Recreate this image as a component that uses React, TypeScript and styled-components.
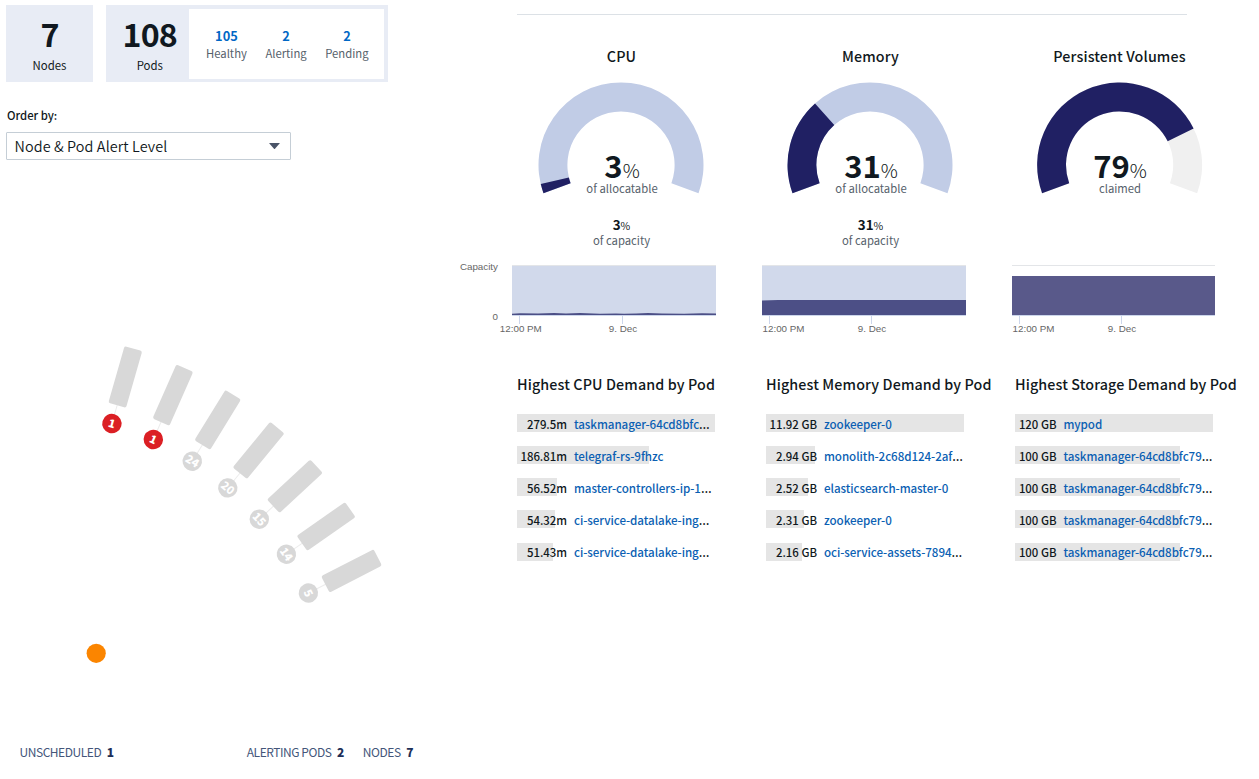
import React from 'react';
import styled, { createGlobalStyle } from 'styled-components';

const GlobalStyle = createGlobalStyle`
  * { box-sizing: border-box; }
  body {
    margin: 0;
    background: #fff;
    color: #101820;
    font-family: "Source Sans Pro", "Noto Sans CJK JP", "Noto Sans", sans-serif;
  }
`;

const Page = styled.main`
  display: flex;
  width: 1259px;
  height: 779px;
  overflow: hidden;
  white-space: nowrap;
`;

/* ---------- left: cluster overview ---------- */

const Overview = styled.section`
  display: flex;
  flex-direction: column;
  width: 447px;
  padding-top: 5px;
`;

const Cards = styled.div`
  display: flex;
  gap: 13px;
  padding-left: 6px;
`;

const Card = styled.div`
  display: flex;
  height: 77px;
  background: #e8ecf5;
`;

const Total = styled.div<{ $shift?: number }>`
  width: ${(p) => (p.$shift ? 83 : 87)}px;
  padding-top: 8px;
  padding-left: ${(p) => p.$shift ?? 0}px;
  text-align: center;
`;

const TotalValue = styled.div`
  margin-bottom: 4px;
  font-size: 32.2px;
  font-weight: 700;
  line-height: 40px;
  letter-spacing: -0.8px;
`;

const TotalLabel = styled.div`
  font-size: 11.4px;
  line-height: 16px;
`;

const StatusBox = styled.div`
  display: flex;
  gap: 18.5px;
  width: 195px;
  margin: 4px 4px 3px 0;
  padding: 18px 15px 0 17px;
  background: #fff;
`;

const Status = styled.div`
  text-align: center;
`;

const StatusCount = styled.div`
  font-size: 12.8px;
  font-weight: 700;
  line-height: 18px;
  color: #0067c5;
`;

const StatusLabel = styled.div`
  font-size: 11.3px;
  line-height: 17px;
  color: #56616b;
`;

const FieldLabel = styled.label`
  margin: 24px 0 8px 7px;
  font-size: 11.3px;
  font-weight: 500;
  line-height: 18px;
`;

const Select = styled.div`
  display: flex;
  align-items: center;
  justify-content: space-between;
  width: 285px;
  height: 28px;
  margin-left: 6px;
  padding: 0 10px 0 7.5px;
  border: 1px solid #c5ced6;
  border-radius: 1px;
  font-size: 14.4px;
  font-weight: 350;
  line-height: 26px;
  letter-spacing: 0.11px;
`;

const NodeMap = styled.svg`
  display: block;
  width: 447px;
  height: 580px;
`;

const NodeText = styled.text`
  font-size: 11.2px;
  font-weight: 900;
  fill: #fff;
  text-anchor: middle;
`;

const Legend = styled.div`
  display: flex;
  width: 413px;
  padding: 3px 0 0 19.5px;
  font-size: 12px;
  line-height: 18px;
  color: #44567a;
`;

const LegendItem = styled.span<{ $push?: boolean }>`
  margin-left: ${(p) => (p.$push ? 'auto' : '0')};
  margin-right: ${(p) => (p.$push ? '19px' : '0')};
  letter-spacing: -0.45px;

  b {
    margin-left: 5.5px;
    color: #1d3058;
    font-weight: 900;
  }
`;

/* ---------- right: metrics ---------- */

const Metrics = styled.section`
  flex: 1;
  padding-top: 14px;
`;

const Rule = styled.hr`
  width: 670px;
  height: 1px;
  margin: 0 0 0 70px;
  border: 0;
  background: #dce1e6;
`;

const Columns = styled.div<{ $top: number }>`
  display: grid;
  grid-template-columns: repeat(3, 249px);
  margin-left: 50px;
  padding-top: ${(p) => p.$top}px;
`;

const GaugeColumn = styled.div`
  display: flex;
  flex-direction: column;
  align-items: center;
  height: 219px;
`;

const Title = styled.h2`
  margin: 0;
  font-size: 14.3px;
  font-weight: 500;
  line-height: 20px;
  letter-spacing: 0.12px;
`;

const Gauge = styled.div`
  display: grid;
  margin: 14px 0 20px;
  height: 116px;

  > * { grid-area: 1 / 1; }
`;

const Readout = styled.div`
  align-self: end;
  padding-left: 1px;
  text-align: center;
`;

const BigValue = styled.div`
  font-size: 31px;
  font-weight: 700;
  line-height: 30px;

  span {
    font-size: 19px;
    font-weight: 300;
    line-height: 0;
  }
`;

const SmallValue = styled.div`
  font-size: 13.4px;
  font-weight: 700;
  line-height: 16px;

  span {
    font-size: 10.5px;
    font-weight: 400;
    line-height: 0;
  }
`;

const Caption = styled.div`
  font-size: 11.3px;
  line-height: 16px;
  color: #56616b;
  text-align: center;
`;

const ChartRow = styled.div`
  display: flex;
  height: 72px;
`;

const Axis = styled.div`
  display: flex;
  flex-direction: column;
  justify-content: space-between;
  width: 65px;
  height: 62px;
  margin-top: -4px;
  padding-right: 14px;
  font: 9.8px/12px "Liberation Sans", Arial, sans-serif;
  color: #666;
  text-align: right;
`;

const Plot = styled.svg`
  display: block;
  width: 204px;
  height: 72px;
  margin-right: 46px;
  overflow: visible;

  text {
    font: 9.8px "Liberation Sans", Arial, sans-serif;
    fill: #666;
    text-anchor: middle;
  }
`;

const DemandColumn = styled.div`
  padding-left: 20px;
`;

const Rows = styled.div`
  display: flex;
  flex-direction: column;
  gap: 14.15px;
  padding-top: 20px;
`;

const Row = styled.div<{ $bar: number }>`
  display: flex;
  width: 198px;
  height: 18px;
  padding-top: 0.8px;
  background: linear-gradient(#e5e5e5, #e5e5e5) no-repeat 0 0 / ${(p) => p.$bar}px 100%;
  font-size: 11.6px;
  line-height: 18px;

  > * { flex-shrink: 0; }
`;

const Amount = styled.span<{ $width: number }>`
  width: ${(p) => p.$width}px;
  margin-right: 7px;
  text-align: right;
  font-weight: 500;
  font-size: 11.4px;
`;

const PodLink = styled.a`
  color: #0b5fb3;
  font-weight: 500;
  letter-spacing: -0.06px;
`;

const Dots = styled.span`
  font-family: "Noto Sans", sans-serif;
  font-size: 13.5px;
`;

const nodes = [
  { x: 111.9, y: 423.6, pods: 1, alert: true },
  { x: 153.3, y: 439.5, pods: 1, alert: true },
  { x: 192.3, y: 461.2, pods: 24 },
  { x: 227.8, y: 487.9, pods: 20 },
  { x: 259.3, y: 519.2, pods: 15 },
  { x: 286.4, y: 554.3, pods: 14 },
  { x: 308.4, y: 593.1, pods: 5 },
];

function polar(radius: number, degrees: number) {
  const a = (degrees * Math.PI) / 180;
  return `${(85 - radius * Math.cos(a)).toFixed(2)} ${(85 - radius * Math.sin(a)).toFixed(2)}`;
}

/* The dial spans 220 degrees, starting 20 degrees below the horizontal. */
function band(from: number, to: number) {
  const a = from * 220 - 20;
  const b = to * 220 - 20;
  const large = b - a > 180 ? 1 : 0;
  return `M${polar(82.5, a)}A82.5 82.5 0 ${large} 1 ${polar(82.5, b)}L${polar(53.6, b)}A53.6 53.6 0 ${large} 0 ${polar(53.6, a)}Z`;
}

interface GaugeData {
  title: string;
  value: number;
  caption: string;
  rest: string;
  viewX: number;
  capacity?: number;
}

const gauges: GaugeData[] = [
  { title: 'CPU', value: 3, caption: 'of allocatable', rest: '#c1cce6', viewX: 0, capacity: 3 },
  { title: 'Memory', value: 31, caption: 'of allocatable', rest: '#c1cce6', viewX: 0, capacity: 31 },
  { title: 'Persistent Volumes', value: 79, caption: 'claimed', rest: '#f0f0f0', viewX: -0.6 },
];

const plots = [
  { area: 'M0 48.8L8 48.2L26 48.5L42 48.1L54 48.5L68 48.1L88 48.7L104 48.5L112 48.7L124 48.5L136 48.1L150 48.5L172 48.7L190 48.2L204 48.4V50H0Z', fill: '#4c4f86', back: '#d1d9eb', tick: 110.5 },
  { area: 'M0 35.5L16 35H204V50H0Z', fill: '#4c4f86', back: '#d1d9eb', tick: 109.5 },
  { area: 'M0 11H203V50H0Z', fill: '#59598a', back: 'none', tick: 109.5 },
];

const demands = [
  {
    title: 'Highest CPU Demand by Pod',
    amountWidth: 50,
    rows: [
      ['279.5m', 'taskmanager-64cd8bfc', true, 198],
      ['186.81m', 'telegraf-rs-9fhzc', false, 132],
      ['56.52m', 'master-controllers-ip-1', true, 40],
      ['54.32m', 'ci-service-datalake-ing', true, 38],
      ['51.43m', 'ci-service-datalake-ing', true, 36],
    ],
  },
  {
    title: 'Highest Memory Demand by Pod',
    amountWidth: 51,
    rows: [
      ['11.92 GB', 'zookeeper-0', false, 198],
      ['2.94 GB', 'monolith-2c68d124-2af', true, 49],
      ['2.52 GB', 'elasticsearch-master-0', false, 42],
      ['2.31 GB', 'zookeeper-0', false, 38],
      ['2.16 GB', 'oci-service-assets-7894', true, 36],
    ],
  },
  {
    title: 'Highest Storage Demand by Pod',
    amountWidth: 41.5,
    rows: [
      ['120 GB', 'mypod', false, 198],
      ['100 GB', 'taskmanager-64cd8bfc79', true, 165],
      ['100 GB', 'taskmanager-64cd8bfc79', true, 165],
      ['100 GB', 'taskmanager-64cd8bfc79', true, 165],
      ['100 GB', 'taskmanager-64cd8bfc79', true, 165],
    ],
  },
] as { title: string; amountWidth: number; rows: [string, string, boolean, number][] }[];

export default function App() {
  return (
    <Page>
      <GlobalStyle />
      <Overview>
        <Cards>
          <Card>
            <Total>
              <TotalValue>7</TotalValue>
              <TotalLabel>Nodes</TotalLabel>
            </Total>
          </Card>
          <Card>
            <Total $shift={4.5}>
              <TotalValue>108</TotalValue>
              <TotalLabel>Pods</TotalLabel>
            </Total>
            <StatusBox>
              {[['105', 'Healthy'], ['2', 'Alerting'], ['2', 'Pending']].map(([n, label]) => (
                <Status key={label}>
                  <StatusCount>{n}</StatusCount>
                  <StatusLabel>{label}</StatusLabel>
                </Status>
              ))}
            </StatusBox>
          </Card>
        </Cards>
        <FieldLabel>Order by:</FieldLabel>
        <Select>
          Node &amp; Pod Alert Level
          <svg width="11" height="6" viewBox="0 0 11 6">
            <path d="M0.6 0H10.4Q11 0 10.6 0.6L6 5.7Q5.5 6.2 5 5.7L0.4 0.6Q0 0 0.6 0Z" fill="#4a5468" />
          </svg>
        </Select>
        <NodeMap viewBox="0 160 447 580">
          {nodes.map((n, i) => (
            <g key={i} transform={`translate(${n.x} ${n.y}) rotate(${16 + 7.8 * i})`}>
              <line y1="-9" y2="-20" stroke="#ececec" strokeWidth="1" />
              <rect x="-9.2" y="-78" width="18.4" height="59" rx="2" fill="#d8d8d8" />
              <circle r="9.7" fill={n.alert ? '#db1f24' : '#d8d8d8'} />
              <NodeText y="4">{n.pods}</NodeText>
            </g>
          ))}
          <circle cx="96.2" cy="653.3" r="9.6" fill="#fb8500" />
        </NodeMap>
        <Legend>
          <LegendItem>UNSCHEDULED<b>1</b></LegendItem>
          <LegendItem $push>ALERTING PODS<b>2</b></LegendItem>
          <LegendItem>NODES<b>7</b></LegendItem>
        </Legend>
      </Overview>

      <Metrics>
        <Rule />
        <Columns $top={31}>
          {gauges.map((g) => (
            <GaugeColumn key={g.title}>
              <Title>{g.title}</Title>
              <Gauge>
                <svg width="171" height="116" viewBox={`${g.viewX} 0 171 116`}>
                  <path d={band(0, 1)} fill={g.rest} />
                  <path d={band(0, g.value / 100)} fill="#202063" />
                </svg>
                <Readout>
                  <BigValue>{g.value}<span>%</span></BigValue>
                  <Caption>{g.caption}</Caption>
                </Readout>
              </Gauge>
              {g.capacity !== undefined && (
                <>
                  <SmallValue>{g.capacity}<span>%</span></SmallValue>
                  <Caption>of capacity</Caption>
                </>
              )}
            </GaugeColumn>
          ))}
        </Columns>
        <ChartRow>
          <Axis>
            <span>Capacity</span>
            <span>0</span>
          </Axis>
          {plots.map((p, i) => (
            <Plot key={i} viewBox="0 0 204 72">
              <rect width="204" height="50" fill={p.back} />
              <rect width={i === 2 ? 203 : 204} height="1" fill="#e3e5e8" />
              <path d={p.area} fill={p.fill} />
              <rect y="50" width={i === 2 ? 203 : 204} height="1" fill="#ccd6eb" />
              <path d={`M7.5 51V59M${p.tick} 51V59`} stroke="#ccd6eb" />
              <text x={i === 0 ? 8.8 : 21.5} y="67">12:00 PM</text>
              <text x={p.tick + 0.5} y="67">9. Dec</text>
            </Plot>
          ))}
        </ChartRow>
        <Columns $top={37}>
          {demands.map((d) => (
            <DemandColumn key={d.title}>
              <Title>{d.title}</Title>
              <Rows>
                {d.rows.map(([amount, pod, cut, bar], i) => (
                  <Row key={i} $bar={bar}>
                    <Amount $width={d.amountWidth}>{amount}</Amount>
                    <PodLink>{pod}</PodLink>
                    {cut && <Dots>…</Dots>}
                  </Row>
                ))}
              </Rows>
            </DemandColumn>
          ))}
        </Columns>
      </Metrics>
    </Page>
  );
}
